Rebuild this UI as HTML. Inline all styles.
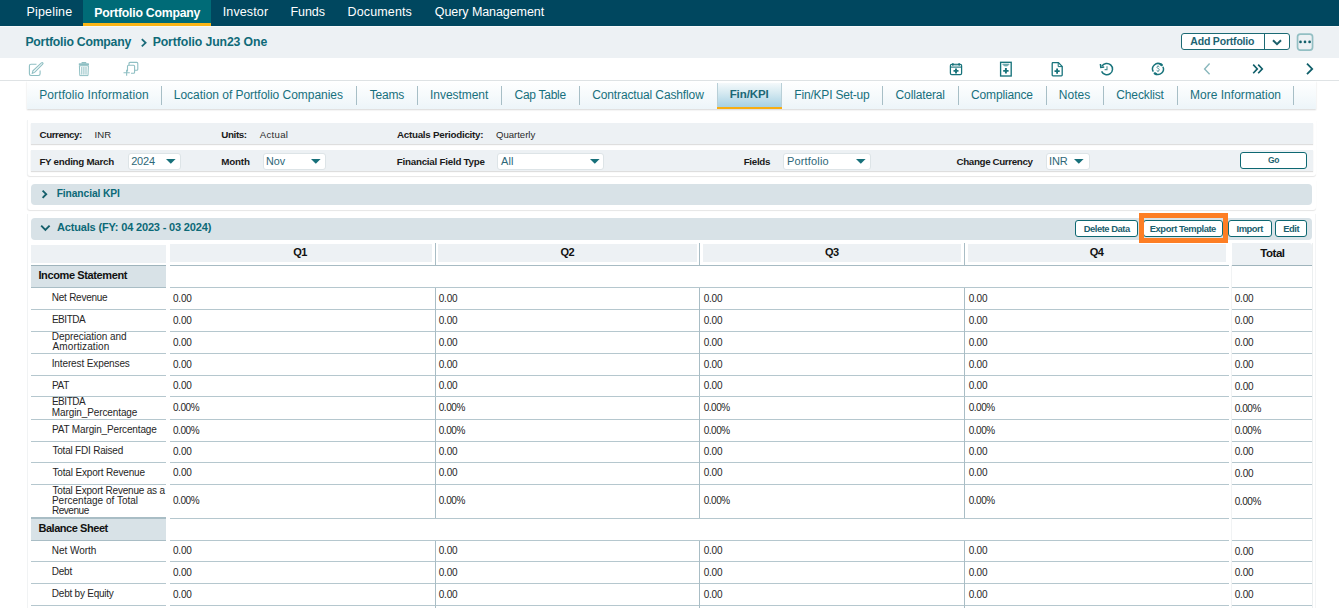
<!DOCTYPE html>
<html><head><meta charset="utf-8">
<style>
html,body{margin:0;padding:0;}
body{width:1339px;height:608px;overflow:hidden;position:relative;background:#ffffff;font-family:"Liberation Sans", sans-serif;}
.r{position:absolute;box-sizing:border-box;}
.t{position:absolute;white-space:nowrap;font-family:"Liberation Sans", sans-serif;}
svg.r{overflow:visible}
</style></head><body>
<!-- NAV -->
<div class="r" style="left:0;top:0;width:1339px;height:26px;background:#00475f"></div>
<div class="r" style="left:83px;top:0;width:128px;height:23px;background:#006b77"></div>
<div class="r" style="left:83px;top:23px;width:128px;height:3px;background:#fbb516"></div>
<!-- BREADCRUMB -->
<div class="r" style="left:0;top:26px;width:1339px;height:31.7px;background:#edf1f4"></div>
<div class="r" style="left:0;top:26px;width:1339px;height:1px;background:#f8fafb"></div>
<svg class="r" style="left:140px;top:38px" width="8" height="10" viewBox="0 0 8 10"><path d="M1.8 1.2 L5.6 4.8 L1.8 8.4" fill="none" stroke="#1b6b7a" stroke-width="1.8"/></svg>
<!-- Add portfolio -->
<div class="r" style="left:1181px;top:33px;width:109px;height:17px;background:#fff;border:1px solid #1b6a74;border-radius:3px"></div>
<div class="r" style="left:1264px;top:33px;width:1px;height:17px;background:#1b6a74"></div>
<svg class="r" style="left:1271px;top:38px" width="12" height="9" viewBox="0 0 12 9"><path d="M2 2.2 L6 6.2 L10 2.2" fill="none" stroke="#1b5f6b" stroke-width="2"/></svg>
<svg class="r" style="left:1294px;top:31px" width="22" height="22" viewBox="0 0 22 22">
<rect x="3.55" y="3.05" width="15" height="16.1" rx="2.8" fill="none" stroke="#93bfc3" stroke-width="1.7"/>
<circle cx="6.5" cy="10.9" r="1.35" fill="#125f6b"/><circle cx="11.0" cy="10.9" r="1.35" fill="#125f6b"/><circle cx="15.6" cy="10.9" r="1.35" fill="#125f6b"/>
</svg>
<!-- TOOLBAR -->
<div class="r" style="left:0;top:80px;width:1339px;height:1px;background:#dfe3e5"></div>
<!-- left icons -->
<svg class="r" style="left:27px;top:61px" width="18" height="16" viewBox="0 0 18 16" fill="none" stroke="#8fbfc3" stroke-width="1.1">
<path d="M9.5 3.2 H4 Q2.4 3.2 2.4 4.8 V12.8 Q2.4 14.5 4 14.5 H11.5 Q13.1 14.5 13.1 12.8 V9.5"/>
<path d="M5.3 12.3 L5.9 9.9 L14.4 1.9 Q15.2 1.3 15.8 1.9 Q16.4 2.6 15.7 3.2 L7.6 11.4 Z"/>
</svg>
<svg class="r" style="left:78px;top:61px" width="12" height="16" viewBox="0 0 12 16" fill="#8fbfc3">
<rect x="0.8" y="2.2" width="10.2" height="2.2" rx="0.6"/>
<rect x="3.5" y="1" width="4.8" height="1.6" rx="0.5"/>
<path d="M1.4 4.8 H10.4 L10 14.6 H1.8 Z" fill="none" stroke="#8fbfc3" stroke-width="1"/>
<rect x="3.3" y="6" width="1" height="7.6"/><rect x="5.4" y="6" width="1" height="7.6"/><rect x="7.5" y="6" width="1" height="7.6"/>
</svg>
<svg class="r" style="left:122px;top:61px" width="17" height="16" viewBox="0 0 17 16" fill="none" stroke="#8fbfc3" stroke-width="1.1">
<path d="M7 4.2 V2.4 Q7 1.4 8 1.4 H14.8 Q15.8 1.4 15.8 2.4 V8.2 Q15.8 9.2 14.8 9.2 H12.6"/>
<path d="M5.5 10.6 V5.2 Q5.5 4.2 6.5 4.2 H11.6 Q12.6 4.2 12.6 5.2 V11.2 Q12.6 12.2 11.6 12.2 H9"/>
<path d="M1.5 11.8 H7.8 M4.65 8.8 V14.8"/>
</svg>
<!-- right icons -->
<svg class="r" style="left:949px;top:62px" width="14" height="14" viewBox="0 0 14 14" fill="none" stroke="#17737b" stroke-width="1.25">
<rect x="1.4" y="2.4" width="11.2" height="10.2" rx="1.3"/>
<path d="M1.6 5.1 H12.4" stroke-width="1.1"/>
<path d="M5.2 3.0 H8.8" stroke-width="1" stroke="#5d9ca2"/>
<path d="M3.9 0.9 V4 M10.1 0.9 V4" stroke-width="1.2"/>
<path d="M7 6.4 V11.4 M4.5 8.9 H9.5" stroke-width="1.9"/>
</svg>
<svg class="r" style="left:999px;top:61px" width="14" height="16" viewBox="0 0 14 16" fill="none" stroke="#17737b" stroke-width="1.35">
<rect x="1.6" y="1.3" width="10.6" height="13.7"/>
<path d="M3.6 3.1 H10.2 L8.4 5.0 H5.4 Z" fill="#6fa9ae" stroke="#6fa9ae" stroke-width="0.8"/>
<path d="M6.9 7.1 V12.6 M4.2 9.85 H9.6" stroke-width="1.9"/>
</svg>
<svg class="r" style="left:1050px;top:61px" width="14" height="16" viewBox="0 0 14 16" fill="none" stroke="#17737b" stroke-width="1.3">
<path d="M2.2 1.6 H8.4 L12.2 5.4 V14 Q12.2 14.8 11.4 14.8 H3 Q2.2 14.8 2.2 14 V2.4 Q2.2 1.6 3 1.6 Z"/>
<path d="M8.2 1.6 V5.6 H12.2" stroke-width="1"/>
<path d="M7.1 7.6 V12.8 M4.5 10.2 H9.7" stroke-width="1.8"/>
</svg>
<svg class="r" style="left:1099px;top:61px" width="16" height="16" viewBox="0 0 16 16" fill="none" stroke="#17737b" stroke-width="1.5">
<path d="M2.9 5.2 A5.7 5.7 0 1 1 2.6 10.4"/>
<path d="M1.4 3 L1.8 6.4 L5.2 6" stroke-width="1.5"/>
<path d="M8 5.2 V8.6 H5.6" stroke-width="1.1" stroke="#4d8f95"/>
</svg>
<svg class="r" style="left:1150px;top:60.7px" width="16" height="16" viewBox="0 0 16 16" fill="none" stroke="#17737b" stroke-width="1.5">
<path d="M11.13 3.54 A5.45 5.45 0 0 0 3.28 10.72"/>
<path d="M5.44 12.81 A5.45 5.45 0 0 0 12.94 5.70"/>
<path d="M11.72 4.01 L10.64 3.23" stroke-width="2.4" stroke-linecap="round"/>
<path d="M4.80 12.41 L5.96 13.05" stroke-width="2.4" stroke-linecap="round"/>
<path d="M9.4 6.0 Q9.0 5.3 8 5.3 Q6.9 5.3 6.9 6.3 Q6.9 7.1 8.1 7.4 Q9.3 7.8 9.3 8.8 Q9.3 10.0 8 10.0 Q7.0 10.0 6.6 9.3 M8 4.5 V5.3 M8 10.0 V10.9" stroke-width="0.9" stroke="#4f9198"/>
</svg>
<svg class="r" style="left:1202px;top:62px" width="10" height="14" viewBox="0 0 10 14"><path d="M7.6 1.6 L2.6 6.9 L7.6 12.2" fill="none" stroke="#8ab8bd" stroke-width="1.4"/></svg>
<svg class="r" style="left:1251px;top:62px" width="14" height="14" viewBox="0 0 14 14" fill="none" stroke="#105f6a" stroke-width="1.6"><path d="M2.2 2.6 L6.3 6.9 L2.2 11.2 M7.2 2.6 L11.3 6.9 L7.2 11.2"/></svg>
<svg class="r" style="left:1304px;top:62px" width="11" height="14" viewBox="0 0 11 14"><path d="M3 1.6 L8.2 6.9 L3 12.2" fill="none" stroke="#105f6a" stroke-width="1.8"/></svg>
<!-- TAB BAR -->
<div class="r" style="left:27px;top:81px;width:1289px;height:27.6px;background:linear-gradient(#ffffff,#edf5f9);box-shadow:0 1px 1.5px rgba(0,0,0,0.16)"></div>
<div class="r" style="left:717px;top:82.5px;width:64.5px;height:24.5px;background:linear-gradient(#f4f9fb 0%,#d3e8f0 45%,#a6d1e4 100%);border-left:1px solid #b8cfd7;border-right:1px solid #b8cfd7"></div>
<div class="r" style="left:717px;top:106.6px;width:64.5px;height:2.2px;background:#f7ad12"></div>
<div class="r" style="left:161.0px;top:86px;width:1px;height:18.5px;background:#a7bec6"></div>
<div class="r" style="left:356.1px;top:86px;width:1px;height:18.5px;background:#a7bec6"></div>
<div class="r" style="left:416.9px;top:86px;width:1px;height:18.5px;background:#a7bec6"></div>
<div class="r" style="left:500.9px;top:86px;width:1px;height:18.5px;background:#a7bec6"></div>
<div class="r" style="left:578.5px;top:86px;width:1px;height:18.5px;background:#a7bec6"></div>
<div class="r" style="left:882.0px;top:86px;width:1px;height:18.5px;background:#a7bec6"></div>
<div class="r" style="left:957.9px;top:86px;width:1px;height:18.5px;background:#a7bec6"></div>
<div class="r" style="left:1045.9px;top:86px;width:1px;height:18.5px;background:#a7bec6"></div>
<div class="r" style="left:1102.8px;top:86px;width:1px;height:18.5px;background:#a7bec6"></div>
<div class="r" style="left:1176.9px;top:86px;width:1px;height:18.5px;background:#a7bec6"></div>
<div class="r" style="left:1293.1px;top:86px;width:1px;height:18.5px;background:#a7bec6"></div>
<!-- CARDS -->
<div class="r" style="left:27px;top:120px;width:1289px;height:56px;background:#fff;border-left:1px solid #f1f3f4;border-radius:0 0 3px 3px;box-shadow:0 1px 1px rgba(0,0,0,0.10)"></div>
<div class="r" style="left:27px;top:180px;width:1289px;height:29.5px;background:#fff;border-left:1px solid #f1f3f4;border-radius:0 0 3px 3px;box-shadow:0 1px 1px rgba(0,0,0,0.10)"></div>
<div class="r" style="left:27px;top:214px;width:1289px;height:420px;background:#fff;border-left:1px solid #f1f3f4;border-right:1px solid #f4f5f6"></div>
<!-- filter rows -->
<div class="r" style="left:31px;top:123px;width:1282px;height:21px;background:#edf1f4;box-shadow:0 1px 1px rgba(0,0,0,0.13)"></div>
<div class="r" style="left:31px;top:150px;width:1282px;height:21px;background:#edf1f4;box-shadow:0 1px 1px rgba(0,0,0,0.13)"></div>
<!-- selects -->
<div class="r" style="left:128px;top:152.5px;width:52.5px;height:17px;background:#fff;border:1px solid #dde4e7;border-radius:3px"></div>
<div class="r" style="left:262.7px;top:152.5px;width:63.5px;height:17px;background:#fff;border:1px solid #dde4e7;border-radius:3px"></div>
<div class="r" style="left:497.3px;top:152.5px;width:107px;height:17px;background:#fff;border:1px solid #dde4e7;border-radius:3px"></div>
<div class="r" style="left:783.3px;top:152.5px;width:88px;height:17px;background:#fff;border:1px solid #dde4e7;border-radius:3px"></div>
<div class="r" style="left:1046.2px;top:152.5px;width:43.5px;height:17px;background:#fff;border:1px solid #dde4e7;border-radius:3px"></div>
<svg class="r" style="left:165.5px;top:159px" width="10" height="5" viewBox="0 0 10 5"><path d="M0 0 H9.6 L4.8 4.8 Z" fill="#17707a"/></svg>
<svg class="r" style="left:311.3px;top:159px" width="10" height="5" viewBox="0 0 10 5"><path d="M0 0 H9.6 L4.8 4.8 Z" fill="#17707a"/></svg>
<svg class="r" style="left:590.0px;top:159px" width="10" height="5" viewBox="0 0 10 5"><path d="M0 0 H9.6 L4.8 4.8 Z" fill="#17707a"/></svg>
<svg class="r" style="left:856.0px;top:159px" width="10" height="5" viewBox="0 0 10 5"><path d="M0 0 H9.6 L4.8 4.8 Z" fill="#17707a"/></svg>
<svg class="r" style="left:1073.6px;top:159px" width="10" height="5" viewBox="0 0 10 5"><path d="M0 0 H9.6 L4.8 4.8 Z" fill="#17707a"/></svg>
<div class="r" style="left:1240.4px;top:152.4px;width:66.8px;height:16.8px;background:#fff;border:1.2px solid #0e6872;border-radius:3px"></div>
<div class="r" style="left:31px;top:184px;width:1281px;height:21px;background:#d8e2e7;border-radius:4px"></div>
<svg class="r" style="left:41px;top:189px" width="8" height="10" viewBox="0 0 8 10"><path d="M1.6 1.6 L5.2 5.2 L1.6 8.8" fill="none" stroke="#155f6b" stroke-width="1.9"/></svg>
<div class="r" style="left:31px;top:218px;width:1281px;height:21.8px;background:#d8e2e7;border-radius:4px"></div>
<svg class="r" style="left:40px;top:224px" width="11" height="8" viewBox="0 0 11 8"><path d="M1.2 1.6 L5.4 5.8 L9.6 1.6" fill="none" stroke="#155f6b" stroke-width="1.9"/></svg>
<div class="r" style="left:1075px;top:220.2px;width:62.7px;height:16.7px;background:#fff;border:1.2px solid #0e6872;border-radius:3px"></div>
<div class="r" style="left:1143.3px;top:220.2px;width:80.2px;height:16.7px;background:#fff;border:1.2px solid #0e6872;border-radius:3px"></div>
<div class="r" style="left:1228.3px;top:220.2px;width:43.6px;height:16.7px;background:#fff;border:1.2px solid #0e6872;border-radius:3px"></div>
<div class="r" style="left:1275px;top:220.2px;width:31.9px;height:16.7px;background:#fff;border:1.2px solid #0e6872;border-radius:3px"></div>
<div class="r" style="left:1139px;top:213px;width:89px;height:30px;border:5px solid #fd7e24"></div>
<div class="r" style="left:31.00px;top:244.50px;width:135.00px;height:18.30px;background:#edf1f4"></div>
<div class="r" style="left:170.00px;top:244.00px;width:262.00px;height:17.80px;background:#edf1f4"></div>
<div class="r" style="left:438.00px;top:244.00px;width:259.00px;height:17.80px;background:#edf1f4"></div>
<div class="r" style="left:703.00px;top:244.00px;width:258.00px;height:17.80px;background:#edf1f4"></div>
<div class="r" style="left:968.00px;top:244.00px;width:258.00px;height:17.80px;background:#edf1f4"></div>
<div class="r" style="left:1232.00px;top:242.50px;width:80.30px;height:22.50px;background:#edf1f4;border-radius:0 3px 0 0"></div>
<div class="r" style="left:1312.00px;top:242.50px;width:1.00px;height:400.00px;background:#eceff0"></div>
<div class="r" style="left:1231.00px;top:265.00px;width:1.00px;height:400.00px;background:#f1f3f4"></div>
<div class="r" style="left:31.00px;top:264.50px;width:135.00px;height:1.30px;background:#9fb4bc"></div>
<div class="r" style="left:170.00px;top:264.60px;width:1059.00px;height:1.20px;background:#a7bbc3"></div>
<div class="r" style="left:1232.00px;top:264.60px;width:80.30px;height:1.30px;background:#9fb4bc"></div>
<div class="r" style="left:435.00px;top:243.00px;width:1.00px;height:22.00px;background:#a9bdc5"></div>
<div class="r" style="left:699.10px;top:243.00px;width:1.00px;height:22.00px;background:#a9bdc5"></div>
<div class="r" style="left:964.10px;top:243.00px;width:1.00px;height:22.00px;background:#a9bdc5"></div>
<div class="r" style="left:31.00px;top:265.50px;width:135.00px;height:22.00px;background:#d8e2e7"></div>
<div class="r" style="left:31.00px;top:287.00px;width:135.00px;height:1.20px;background:#a9bdc5"></div>
<div class="r" style="left:170.00px;top:287.00px;width:1059.00px;height:1.10px;background:#b5c7ce"></div>
<div class="r" style="left:1232.00px;top:287.00px;width:80.30px;height:1.10px;background:#b5c7ce"></div>
<div class="r" style="left:31.00px;top:308.80px;width:135.00px;height:1.10px;background:#b5c7ce"></div>
<div class="r" style="left:170.00px;top:308.80px;width:1059.00px;height:1.10px;background:#b5c7ce"></div>
<div class="r" style="left:1232.00px;top:308.80px;width:80.30px;height:1.10px;background:#b5c7ce"></div>
<div class="r" style="left:435.00px;top:287.50px;width:1.00px;height:21.80px;background:#a9bdc5"></div>
<div class="r" style="left:699.10px;top:287.50px;width:1.00px;height:21.80px;background:#a9bdc5"></div>
<div class="r" style="left:964.10px;top:287.50px;width:1.00px;height:21.80px;background:#a9bdc5"></div>
<div class="r" style="left:31.00px;top:330.90px;width:135.00px;height:1.10px;background:#b5c7ce"></div>
<div class="r" style="left:170.00px;top:330.90px;width:1059.00px;height:1.10px;background:#b5c7ce"></div>
<div class="r" style="left:1232.00px;top:330.90px;width:80.30px;height:1.10px;background:#b5c7ce"></div>
<div class="r" style="left:435.00px;top:309.30px;width:1.00px;height:22.10px;background:#a9bdc5"></div>
<div class="r" style="left:699.10px;top:309.30px;width:1.00px;height:22.10px;background:#a9bdc5"></div>
<div class="r" style="left:964.10px;top:309.30px;width:1.00px;height:22.10px;background:#a9bdc5"></div>
<div class="r" style="left:31.00px;top:352.70px;width:135.00px;height:1.10px;background:#b5c7ce"></div>
<div class="r" style="left:170.00px;top:352.70px;width:1059.00px;height:1.10px;background:#b5c7ce"></div>
<div class="r" style="left:1232.00px;top:352.70px;width:80.30px;height:1.10px;background:#b5c7ce"></div>
<div class="r" style="left:435.00px;top:331.40px;width:1.00px;height:21.80px;background:#a9bdc5"></div>
<div class="r" style="left:699.10px;top:331.40px;width:1.00px;height:21.80px;background:#a9bdc5"></div>
<div class="r" style="left:964.10px;top:331.40px;width:1.00px;height:21.80px;background:#a9bdc5"></div>
<div class="r" style="left:31.00px;top:374.90px;width:135.00px;height:1.10px;background:#b5c7ce"></div>
<div class="r" style="left:170.00px;top:374.90px;width:1059.00px;height:1.10px;background:#b5c7ce"></div>
<div class="r" style="left:1232.00px;top:374.90px;width:80.30px;height:1.10px;background:#b5c7ce"></div>
<div class="r" style="left:435.00px;top:353.20px;width:1.00px;height:22.20px;background:#a9bdc5"></div>
<div class="r" style="left:699.10px;top:353.20px;width:1.00px;height:22.20px;background:#a9bdc5"></div>
<div class="r" style="left:964.10px;top:353.20px;width:1.00px;height:22.20px;background:#a9bdc5"></div>
<div class="r" style="left:31.00px;top:396.00px;width:135.00px;height:1.10px;background:#b5c7ce"></div>
<div class="r" style="left:170.00px;top:396.00px;width:1059.00px;height:1.10px;background:#b5c7ce"></div>
<div class="r" style="left:1232.00px;top:396.00px;width:80.30px;height:1.10px;background:#b5c7ce"></div>
<div class="r" style="left:435.00px;top:375.40px;width:1.00px;height:21.10px;background:#a9bdc5"></div>
<div class="r" style="left:699.10px;top:375.40px;width:1.00px;height:21.10px;background:#a9bdc5"></div>
<div class="r" style="left:964.10px;top:375.40px;width:1.00px;height:21.10px;background:#a9bdc5"></div>
<div class="r" style="left:31.00px;top:418.90px;width:135.00px;height:1.10px;background:#b5c7ce"></div>
<div class="r" style="left:170.00px;top:418.90px;width:1059.00px;height:1.10px;background:#b5c7ce"></div>
<div class="r" style="left:1232.00px;top:418.90px;width:80.30px;height:1.10px;background:#b5c7ce"></div>
<div class="r" style="left:435.00px;top:396.50px;width:1.00px;height:22.90px;background:#a9bdc5"></div>
<div class="r" style="left:699.10px;top:396.50px;width:1.00px;height:22.90px;background:#a9bdc5"></div>
<div class="r" style="left:964.10px;top:396.50px;width:1.00px;height:22.90px;background:#a9bdc5"></div>
<div class="r" style="left:31.00px;top:440.80px;width:135.00px;height:1.10px;background:#b5c7ce"></div>
<div class="r" style="left:170.00px;top:440.80px;width:1059.00px;height:1.10px;background:#b5c7ce"></div>
<div class="r" style="left:1232.00px;top:440.80px;width:80.30px;height:1.10px;background:#b5c7ce"></div>
<div class="r" style="left:435.00px;top:419.40px;width:1.00px;height:21.90px;background:#a9bdc5"></div>
<div class="r" style="left:699.10px;top:419.40px;width:1.00px;height:21.90px;background:#a9bdc5"></div>
<div class="r" style="left:964.10px;top:419.40px;width:1.00px;height:21.90px;background:#a9bdc5"></div>
<div class="r" style="left:31.00px;top:461.90px;width:135.00px;height:1.10px;background:#b5c7ce"></div>
<div class="r" style="left:170.00px;top:461.90px;width:1059.00px;height:1.10px;background:#b5c7ce"></div>
<div class="r" style="left:1232.00px;top:461.90px;width:80.30px;height:1.10px;background:#b5c7ce"></div>
<div class="r" style="left:435.00px;top:441.30px;width:1.00px;height:21.10px;background:#a9bdc5"></div>
<div class="r" style="left:699.10px;top:441.30px;width:1.00px;height:21.10px;background:#a9bdc5"></div>
<div class="r" style="left:964.10px;top:441.30px;width:1.00px;height:21.10px;background:#a9bdc5"></div>
<div class="r" style="left:31.00px;top:483.60px;width:135.00px;height:1.10px;background:#b5c7ce"></div>
<div class="r" style="left:170.00px;top:483.60px;width:1059.00px;height:1.10px;background:#b5c7ce"></div>
<div class="r" style="left:1232.00px;top:483.60px;width:80.30px;height:1.10px;background:#b5c7ce"></div>
<div class="r" style="left:435.00px;top:462.40px;width:1.00px;height:21.70px;background:#a9bdc5"></div>
<div class="r" style="left:699.10px;top:462.40px;width:1.00px;height:21.70px;background:#a9bdc5"></div>
<div class="r" style="left:964.10px;top:462.40px;width:1.00px;height:21.70px;background:#a9bdc5"></div>
<div class="r" style="left:31.00px;top:517.60px;width:135.00px;height:1.10px;background:#b5c7ce"></div>
<div class="r" style="left:170.00px;top:517.60px;width:1059.00px;height:1.10px;background:#b5c7ce"></div>
<div class="r" style="left:1232.00px;top:517.60px;width:80.30px;height:1.10px;background:#b5c7ce"></div>
<div class="r" style="left:435.00px;top:484.10px;width:1.00px;height:34.00px;background:#a9bdc5"></div>
<div class="r" style="left:699.10px;top:484.10px;width:1.00px;height:34.00px;background:#a9bdc5"></div>
<div class="r" style="left:964.10px;top:484.10px;width:1.00px;height:34.00px;background:#a9bdc5"></div>
<div class="r" style="left:31.00px;top:518.10px;width:135.00px;height:22.50px;background:#d8e2e7"></div>
<div class="r" style="left:31.00px;top:540.10px;width:135.00px;height:1.20px;background:#a9bdc5"></div>
<div class="r" style="left:170.00px;top:540.10px;width:1059.00px;height:1.10px;background:#b5c7ce"></div>
<div class="r" style="left:1232.00px;top:540.10px;width:80.30px;height:1.10px;background:#b5c7ce"></div>
<div class="r" style="left:31.00px;top:517.30px;width:135.00px;height:1.60px;background:#a9bdc5"></div>
<div class="r" style="left:31.00px;top:561.30px;width:135.00px;height:1.10px;background:#b5c7ce"></div>
<div class="r" style="left:170.00px;top:561.30px;width:1059.00px;height:1.10px;background:#b5c7ce"></div>
<div class="r" style="left:1232.00px;top:561.30px;width:80.30px;height:1.10px;background:#b5c7ce"></div>
<div class="r" style="left:435.00px;top:540.60px;width:1.00px;height:21.20px;background:#a9bdc5"></div>
<div class="r" style="left:699.10px;top:540.60px;width:1.00px;height:21.20px;background:#a9bdc5"></div>
<div class="r" style="left:964.10px;top:540.60px;width:1.00px;height:21.20px;background:#a9bdc5"></div>
<div class="r" style="left:31.00px;top:582.90px;width:135.00px;height:1.10px;background:#b5c7ce"></div>
<div class="r" style="left:170.00px;top:582.90px;width:1059.00px;height:1.10px;background:#b5c7ce"></div>
<div class="r" style="left:1232.00px;top:582.90px;width:80.30px;height:1.10px;background:#b5c7ce"></div>
<div class="r" style="left:435.00px;top:561.80px;width:1.00px;height:21.60px;background:#a9bdc5"></div>
<div class="r" style="left:699.10px;top:561.80px;width:1.00px;height:21.60px;background:#a9bdc5"></div>
<div class="r" style="left:964.10px;top:561.80px;width:1.00px;height:21.60px;background:#a9bdc5"></div>
<div class="r" style="left:31.00px;top:604.90px;width:135.00px;height:1.10px;background:#b5c7ce"></div>
<div class="r" style="left:170.00px;top:604.90px;width:1059.00px;height:1.10px;background:#b5c7ce"></div>
<div class="r" style="left:1232.00px;top:604.90px;width:80.30px;height:1.10px;background:#b5c7ce"></div>
<div class="r" style="left:435.00px;top:583.40px;width:1.00px;height:22.00px;background:#a9bdc5"></div>
<div class="r" style="left:699.10px;top:583.40px;width:1.00px;height:22.00px;background:#a9bdc5"></div>
<div class="r" style="left:964.10px;top:583.40px;width:1.00px;height:22.00px;background:#a9bdc5"></div>
<div class="r" style="left:31.00px;top:626.50px;width:135.00px;height:1.10px;background:#b5c7ce"></div>
<div class="r" style="left:170.00px;top:626.50px;width:1059.00px;height:1.10px;background:#b5c7ce"></div>
<div class="r" style="left:1232.00px;top:626.50px;width:80.30px;height:1.10px;background:#b5c7ce"></div>
<div class="r" style="left:435.00px;top:605.40px;width:1.00px;height:21.60px;background:#a9bdc5"></div>
<div class="r" style="left:699.10px;top:605.40px;width:1.00px;height:21.60px;background:#a9bdc5"></div>
<div class="r" style="left:964.10px;top:605.40px;width:1.00px;height:21.60px;background:#a9bdc5"></div>
<span class="t" style="left:26.49px;top:6.00px;font-size:12.5px;line-height:12.5px;font-weight:400;color:#ffffff;letter-spacing:0.178px;">Pipeline</span>
<span class="t" style="left:222.77px;top:6.00px;font-size:12.5px;line-height:12.5px;font-weight:400;color:#ffffff;letter-spacing:0.116px;">Investor</span>
<span class="t" style="left:290.49px;top:6.00px;font-size:12.5px;line-height:12.5px;font-weight:400;color:#ffffff;letter-spacing:-0.079px;">Funds</span>
<span class="t" style="left:347.59px;top:6.00px;font-size:12.5px;line-height:12.5px;font-weight:400;color:#ffffff;letter-spacing:0.134px;">Documents</span>
<span class="t" style="left:434.82px;top:6.00px;font-size:12.5px;line-height:12.5px;font-weight:400;color:#ffffff;letter-spacing:-0.074px;">Query Management</span>
<span class="t" style="left:94.28px;top:6.80px;font-size:12.25px;line-height:12.25px;font-weight:700;color:#ffffff;letter-spacing:-0.219px;">Portfolio Company</span>
<span class="t" style="left:25.43px;top:35.70px;font-size:12.25px;line-height:12.25px;font-weight:700;color:#0f6a78;letter-spacing:-0.235px;">Portfolio Company</span>
<span class="t" style="left:152.68px;top:35.70px;font-size:12.25px;line-height:12.25px;font-weight:700;color:#0f6a78;letter-spacing:-0.101px;">Portfolio Jun23 One</span>
<span class="t" style="left:1190.28px;top:36.10px;font-size:10.5px;line-height:10.5px;font-weight:700;color:#1d6472;letter-spacing:-0.188px;">Add Portfolio</span>
<span class="t" style="left:39.23px;top:89.00px;font-size:12px;line-height:12px;font-weight:400;color:#17707d;letter-spacing:0.100px;">Portfolio Information</span>
<span class="t" style="left:173.83px;top:89.00px;font-size:12px;line-height:12px;font-weight:400;color:#17707d;letter-spacing:-0.033px;">Location of Portfolio Companies</span>
<span class="t" style="left:369.72px;top:89.00px;font-size:12px;line-height:12px;font-weight:400;color:#17707d;letter-spacing:-0.189px;">Teams</span>
<span class="t" style="left:430.00px;top:89.00px;font-size:12px;line-height:12px;font-weight:400;color:#17707d;letter-spacing:-0.042px;">Investment</span>
<span class="t" style="left:514.59px;top:89.00px;font-size:12px;line-height:12px;font-weight:400;color:#17707d;letter-spacing:-0.292px;">Cap Table</span>
<span class="t" style="left:592.19px;top:89.00px;font-size:12px;line-height:12px;font-weight:400;color:#17707d;letter-spacing:-0.127px;">Contractual Cashflow</span>
<span class="t" style="left:794.33px;top:89.00px;font-size:12px;line-height:12px;font-weight:400;color:#17707d;letter-spacing:-0.201px;">Fin/KPI Set-up</span>
<span class="t" style="left:895.59px;top:89.00px;font-size:12px;line-height:12px;font-weight:400;color:#17707d;letter-spacing:-0.139px;">Collateral</span>
<span class="t" style="left:971.09px;top:89.00px;font-size:12px;line-height:12px;font-weight:400;color:#17707d;letter-spacing:-0.161px;">Compliance</span>
<span class="t" style="left:1058.63px;top:89.00px;font-size:12px;line-height:12px;font-weight:400;color:#17707d;letter-spacing:0.084px;">Notes</span>
<span class="t" style="left:1116.29px;top:89.00px;font-size:12px;line-height:12px;font-weight:400;color:#17707d;letter-spacing:-0.133px;">Checklist</span>
<span class="t" style="left:1189.93px;top:89.00px;font-size:12px;line-height:12px;font-weight:400;color:#17707d;letter-spacing:0.027px;">More Information</span>
<span class="t" style="left:729.69px;top:89.30px;font-size:11.5px;line-height:11.5px;font-weight:700;color:#1b6776;letter-spacing:-0.095px;">Fin/KPI</span>
<span class="t" style="left:39.55px;top:129.80px;font-size:9.8px;line-height:9.8px;font-weight:700;color:#1a1a1a;letter-spacing:-0.445px;">Currency:</span>
<span class="t" style="left:221.32px;top:129.80px;font-size:9.8px;line-height:9.8px;font-weight:700;color:#1a1a1a;letter-spacing:-0.404px;">Units:</span>
<span class="t" style="left:396.95px;top:129.80px;font-size:9.8px;line-height:9.8px;font-weight:700;color:#1a1a1a;letter-spacing:-0.257px;">Actuals Periodicity:</span>
<span class="t" style="left:94.51px;top:129.80px;font-size:9.6px;line-height:9.6px;font-weight:400;color:#2a2a2a;letter-spacing:0.114px;">INR</span>
<span class="t" style="left:259.84px;top:129.80px;font-size:9.6px;line-height:9.6px;font-weight:400;color:#2a2a2a;letter-spacing:0.285px;">Actual</span>
<span class="t" style="left:495.97px;top:129.80px;font-size:9.6px;line-height:9.6px;font-weight:400;color:#2a2a2a;letter-spacing:-0.022px;">Quarterly</span>
<span class="t" style="left:39.39px;top:156.90px;font-size:9.8px;line-height:9.8px;font-weight:700;color:#1a1a1a;letter-spacing:-0.282px;">FY ending March</span>
<span class="t" style="left:221.29px;top:156.90px;font-size:9.8px;line-height:9.8px;font-weight:700;color:#1a1a1a;letter-spacing:-0.183px;">Month</span>
<span class="t" style="left:396.79px;top:156.90px;font-size:9.8px;line-height:9.8px;font-weight:700;color:#1a1a1a;letter-spacing:-0.247px;">Financial Field Type</span>
<span class="t" style="left:743.69px;top:156.90px;font-size:9.8px;line-height:9.8px;font-weight:700;color:#1a1a1a;letter-spacing:-0.312px;">Fields</span>
<span class="t" style="left:956.55px;top:156.90px;font-size:9.8px;line-height:9.8px;font-weight:700;color:#1a1a1a;letter-spacing:-0.378px;">Change Currency</span>
<span class="t" style="left:131.15px;top:155.90px;font-size:11px;line-height:11px;font-weight:400;color:#2e6878;letter-spacing:-0.194px;">2024</span>
<span class="t" style="left:265.94px;top:155.90px;font-size:10.75px;line-height:10.75px;font-weight:400;color:#2e6878;letter-spacing:0.007px;">Nov</span>
<span class="t" style="left:501.12px;top:155.90px;font-size:11px;line-height:11px;font-weight:400;color:#2e6878;letter-spacing:0.027px;">All</span>
<span class="t" style="left:786.96px;top:155.90px;font-size:11px;line-height:11px;font-weight:400;color:#2e6878;letter-spacing:0.164px;">Portfolio</span>
<span class="t" style="left:1049.10px;top:155.90px;font-size:11px;line-height:11px;font-weight:400;color:#2e6878;letter-spacing:-0.225px;">INR</span>
<span class="t" style="left:1267.98px;top:155.90px;font-size:8.5px;line-height:8.5px;font-weight:700;color:#1d6472;letter-spacing:-0.450px;">Go</span>
<span class="t" style="left:56.66px;top:189.00px;font-size:10.25px;line-height:10.25px;font-weight:700;color:#0c6977;letter-spacing:-0.089px;">Financial KPI</span>
<span class="t" style="left:56.95px;top:222.20px;font-size:11.0px;line-height:11.0px;font-weight:700;color:#0c6977;letter-spacing:-0.166px;">Actuals (FY: 04 2023 - 03 2024)</span>
<span class="t" style="left:1083.69px;top:224.00px;font-size:9.4px;line-height:9.4px;font-weight:700;color:#1b5f6e;letter-spacing:-0.450px;">Delete Data</span>
<span class="t" style="left:1149.79px;top:224.00px;font-size:9.4px;line-height:9.4px;font-weight:700;color:#1b5f6e;letter-spacing:-0.444px;">Export Template</span>
<span class="t" style="left:1236.49px;top:224.00px;font-size:9.4px;line-height:9.4px;font-weight:700;color:#1b5f6e;letter-spacing:-0.450px;">Import</span>
<span class="t" style="left:1283.29px;top:224.00px;font-size:9.4px;line-height:9.4px;font-weight:700;color:#1b5f6e;letter-spacing:-0.450px;">Edit</span>
<span class="t" style="left:38.42px;top:269.90px;font-size:11px;line-height:11px;font-weight:700;color:#111111;letter-spacing:-0.384px;">Income Statement</span>
<span class="t" style="left:51.82px;top:293.00px;font-size:10px;line-height:10px;font-weight:400;color:#262626;letter-spacing:-0.251px;">Net Revenue</span>
<span class="t" style="left:172.94px;top:293.60px;font-size:10px;line-height:10px;font-weight:400;color:#262626;letter-spacing:-0.198px;">0.00</span>
<span class="t" style="left:438.74px;top:293.60px;font-size:10px;line-height:10px;font-weight:400;color:#262626;letter-spacing:-0.198px;">0.00</span>
<span class="t" style="left:703.64px;top:293.60px;font-size:10px;line-height:10px;font-weight:400;color:#262626;letter-spacing:-0.198px;">0.00</span>
<span class="t" style="left:968.64px;top:293.60px;font-size:10px;line-height:10px;font-weight:400;color:#262626;letter-spacing:-0.198px;">0.00</span>
<span class="t" style="left:1234.74px;top:294.00px;font-size:10px;line-height:10px;font-weight:400;color:#262626;letter-spacing:-0.198px;">0.00</span>
<span class="t" style="left:51.90px;top:314.95px;font-size:10px;line-height:10px;font-weight:400;color:#262626;letter-spacing:-0.450px;">EBITDA</span>
<span class="t" style="left:172.94px;top:315.55px;font-size:10px;line-height:10px;font-weight:400;color:#262626;letter-spacing:-0.198px;">0.00</span>
<span class="t" style="left:438.74px;top:315.55px;font-size:10px;line-height:10px;font-weight:400;color:#262626;letter-spacing:-0.198px;">0.00</span>
<span class="t" style="left:703.64px;top:315.55px;font-size:10px;line-height:10px;font-weight:400;color:#262626;letter-spacing:-0.198px;">0.00</span>
<span class="t" style="left:968.64px;top:315.55px;font-size:10px;line-height:10px;font-weight:400;color:#262626;letter-spacing:-0.198px;">0.00</span>
<span class="t" style="left:1234.74px;top:315.95px;font-size:10px;line-height:10px;font-weight:400;color:#262626;letter-spacing:-0.198px;">0.00</span>
<span class="t" style="left:51.83px;top:331.60px;font-size:10px;line-height:10px;font-weight:400;color:#262626;letter-spacing:-0.062px;">Depreciation and</span>
<span class="t" style="left:52.60px;top:341.50px;font-size:10px;line-height:10px;font-weight:400;color:#262626;letter-spacing:0.102px;">Amortization</span>
<span class="t" style="left:172.94px;top:337.50px;font-size:10px;line-height:10px;font-weight:400;color:#262626;letter-spacing:-0.198px;">0.00</span>
<span class="t" style="left:438.74px;top:337.50px;font-size:10px;line-height:10px;font-weight:400;color:#262626;letter-spacing:-0.198px;">0.00</span>
<span class="t" style="left:703.64px;top:337.50px;font-size:10px;line-height:10px;font-weight:400;color:#262626;letter-spacing:-0.198px;">0.00</span>
<span class="t" style="left:968.64px;top:337.50px;font-size:10px;line-height:10px;font-weight:400;color:#262626;letter-spacing:-0.198px;">0.00</span>
<span class="t" style="left:1234.74px;top:337.90px;font-size:10px;line-height:10px;font-weight:400;color:#262626;letter-spacing:-0.198px;">0.00</span>
<span class="t" style="left:51.66px;top:358.90px;font-size:10px;line-height:10px;font-weight:400;color:#262626;letter-spacing:-0.115px;">Interest Expenses</span>
<span class="t" style="left:172.94px;top:359.50px;font-size:10px;line-height:10px;font-weight:400;color:#262626;letter-spacing:-0.198px;">0.00</span>
<span class="t" style="left:438.74px;top:359.50px;font-size:10px;line-height:10px;font-weight:400;color:#262626;letter-spacing:-0.198px;">0.00</span>
<span class="t" style="left:703.64px;top:359.50px;font-size:10px;line-height:10px;font-weight:400;color:#262626;letter-spacing:-0.198px;">0.00</span>
<span class="t" style="left:968.64px;top:359.50px;font-size:10px;line-height:10px;font-weight:400;color:#262626;letter-spacing:-0.198px;">0.00</span>
<span class="t" style="left:1234.74px;top:359.90px;font-size:10px;line-height:10px;font-weight:400;color:#262626;letter-spacing:-0.198px;">0.00</span>
<span class="t" style="left:51.90px;top:380.55px;font-size:10px;line-height:10px;font-weight:400;color:#262626;letter-spacing:-0.302px;">PAT</span>
<span class="t" style="left:172.94px;top:381.15px;font-size:10px;line-height:10px;font-weight:400;color:#262626;letter-spacing:-0.198px;">0.00</span>
<span class="t" style="left:438.74px;top:381.15px;font-size:10px;line-height:10px;font-weight:400;color:#262626;letter-spacing:-0.198px;">0.00</span>
<span class="t" style="left:703.64px;top:381.15px;font-size:10px;line-height:10px;font-weight:400;color:#262626;letter-spacing:-0.198px;">0.00</span>
<span class="t" style="left:968.64px;top:381.15px;font-size:10px;line-height:10px;font-weight:400;color:#262626;letter-spacing:-0.198px;">0.00</span>
<span class="t" style="left:1234.74px;top:381.55px;font-size:10px;line-height:10px;font-weight:400;color:#262626;letter-spacing:-0.198px;">0.00</span>
<span class="t" style="left:51.90px;top:397.20px;font-size:10px;line-height:10px;font-weight:400;color:#262626;letter-spacing:-0.450px;">EBITDA</span>
<span class="t" style="left:51.84px;top:407.80px;font-size:10px;line-height:10px;font-weight:400;color:#262626;letter-spacing:-0.109px;">Margin_Percentage</span>
<span class="t" style="left:172.94px;top:403.15px;font-size:10px;line-height:10px;font-weight:400;color:#262626;letter-spacing:-0.430px;">0.00%</span>
<span class="t" style="left:438.74px;top:403.15px;font-size:10px;line-height:10px;font-weight:400;color:#262626;letter-spacing:-0.430px;">0.00%</span>
<span class="t" style="left:703.64px;top:403.15px;font-size:10px;line-height:10px;font-weight:400;color:#262626;letter-spacing:-0.430px;">0.00%</span>
<span class="t" style="left:968.64px;top:403.15px;font-size:10px;line-height:10px;font-weight:400;color:#262626;letter-spacing:-0.430px;">0.00%</span>
<span class="t" style="left:1234.74px;top:403.55px;font-size:10px;line-height:10px;font-weight:400;color:#262626;letter-spacing:-0.430px;">0.00%</span>
<span class="t" style="left:51.90px;top:424.95px;font-size:10px;line-height:10px;font-weight:400;color:#262626;letter-spacing:-0.146px;">PAT Margin_Percentage</span>
<span class="t" style="left:172.94px;top:425.55px;font-size:10px;line-height:10px;font-weight:400;color:#262626;letter-spacing:-0.430px;">0.00%</span>
<span class="t" style="left:438.74px;top:425.55px;font-size:10px;line-height:10px;font-weight:400;color:#262626;letter-spacing:-0.430px;">0.00%</span>
<span class="t" style="left:703.64px;top:425.55px;font-size:10px;line-height:10px;font-weight:400;color:#262626;letter-spacing:-0.430px;">0.00%</span>
<span class="t" style="left:968.64px;top:425.55px;font-size:10px;line-height:10px;font-weight:400;color:#262626;letter-spacing:-0.430px;">0.00%</span>
<span class="t" style="left:1234.74px;top:425.95px;font-size:10px;line-height:10px;font-weight:400;color:#262626;letter-spacing:-0.430px;">0.00%</span>
<span class="t" style="left:52.49px;top:446.45px;font-size:10px;line-height:10px;font-weight:400;color:#262626;letter-spacing:-0.211px;">Total FDI Raised</span>
<span class="t" style="left:172.94px;top:447.05px;font-size:10px;line-height:10px;font-weight:400;color:#262626;letter-spacing:-0.198px;">0.00</span>
<span class="t" style="left:438.74px;top:447.05px;font-size:10px;line-height:10px;font-weight:400;color:#262626;letter-spacing:-0.198px;">0.00</span>
<span class="t" style="left:703.64px;top:447.05px;font-size:10px;line-height:10px;font-weight:400;color:#262626;letter-spacing:-0.198px;">0.00</span>
<span class="t" style="left:968.64px;top:447.05px;font-size:10px;line-height:10px;font-weight:400;color:#262626;letter-spacing:-0.198px;">0.00</span>
<span class="t" style="left:1234.74px;top:447.45px;font-size:10px;line-height:10px;font-weight:400;color:#262626;letter-spacing:-0.198px;">0.00</span>
<span class="t" style="left:52.49px;top:467.85px;font-size:10px;line-height:10px;font-weight:400;color:#262626;letter-spacing:-0.159px;">Total Export Revenue</span>
<span class="t" style="left:172.94px;top:468.45px;font-size:10px;line-height:10px;font-weight:400;color:#262626;letter-spacing:-0.198px;">0.00</span>
<span class="t" style="left:438.74px;top:468.45px;font-size:10px;line-height:10px;font-weight:400;color:#262626;letter-spacing:-0.198px;">0.00</span>
<span class="t" style="left:703.64px;top:468.45px;font-size:10px;line-height:10px;font-weight:400;color:#262626;letter-spacing:-0.198px;">0.00</span>
<span class="t" style="left:968.64px;top:468.45px;font-size:10px;line-height:10px;font-weight:400;color:#262626;letter-spacing:-0.198px;">0.00</span>
<span class="t" style="left:1234.74px;top:468.85px;font-size:10px;line-height:10px;font-weight:400;color:#262626;letter-spacing:-0.198px;">0.00</span>
<span class="t" style="left:52.49px;top:485.50px;font-size:10px;line-height:10px;font-weight:400;color:#262626;letter-spacing:-0.198px;">Total Export Revenue as a</span>
<span class="t" style="left:51.90px;top:496.10px;font-size:10px;line-height:10px;font-weight:400;color:#262626;letter-spacing:0.012px;">Percentage of Total</span>
<span class="t" style="left:51.90px;top:505.90px;font-size:10px;line-height:10px;font-weight:400;color:#262626;letter-spacing:-0.450px;">Revenue</span>
<span class="t" style="left:172.94px;top:496.30px;font-size:10px;line-height:10px;font-weight:400;color:#262626;letter-spacing:-0.430px;">0.00%</span>
<span class="t" style="left:438.74px;top:496.30px;font-size:10px;line-height:10px;font-weight:400;color:#262626;letter-spacing:-0.430px;">0.00%</span>
<span class="t" style="left:703.64px;top:496.30px;font-size:10px;line-height:10px;font-weight:400;color:#262626;letter-spacing:-0.430px;">0.00%</span>
<span class="t" style="left:968.64px;top:496.30px;font-size:10px;line-height:10px;font-weight:400;color:#262626;letter-spacing:-0.430px;">0.00%</span>
<span class="t" style="left:1234.74px;top:496.70px;font-size:10px;line-height:10px;font-weight:400;color:#262626;letter-spacing:-0.430px;">0.00%</span>
<span class="t" style="left:38.42px;top:523.00px;font-size:11px;line-height:11px;font-weight:700;color:#111111;letter-spacing:-0.450px;">Balance Sheet</span>
<span class="t" style="left:51.82px;top:545.80px;font-size:10px;line-height:10px;font-weight:400;color:#262626;letter-spacing:-0.037px;">Net Worth</span>
<span class="t" style="left:172.94px;top:546.40px;font-size:10px;line-height:10px;font-weight:400;color:#262626;letter-spacing:-0.198px;">0.00</span>
<span class="t" style="left:438.74px;top:546.40px;font-size:10px;line-height:10px;font-weight:400;color:#262626;letter-spacing:-0.198px;">0.00</span>
<span class="t" style="left:703.64px;top:546.40px;font-size:10px;line-height:10px;font-weight:400;color:#262626;letter-spacing:-0.198px;">0.00</span>
<span class="t" style="left:968.64px;top:546.40px;font-size:10px;line-height:10px;font-weight:400;color:#262626;letter-spacing:-0.198px;">0.00</span>
<span class="t" style="left:1234.74px;top:546.80px;font-size:10px;line-height:10px;font-weight:400;color:#262626;letter-spacing:-0.198px;">0.00</span>
<span class="t" style="left:51.83px;top:567.20px;font-size:10px;line-height:10px;font-weight:400;color:#262626;letter-spacing:-0.257px;">Debt</span>
<span class="t" style="left:172.94px;top:567.80px;font-size:10px;line-height:10px;font-weight:400;color:#262626;letter-spacing:-0.198px;">0.00</span>
<span class="t" style="left:438.74px;top:567.80px;font-size:10px;line-height:10px;font-weight:400;color:#262626;letter-spacing:-0.198px;">0.00</span>
<span class="t" style="left:703.64px;top:567.80px;font-size:10px;line-height:10px;font-weight:400;color:#262626;letter-spacing:-0.198px;">0.00</span>
<span class="t" style="left:968.64px;top:567.80px;font-size:10px;line-height:10px;font-weight:400;color:#262626;letter-spacing:-0.198px;">0.00</span>
<span class="t" style="left:1234.74px;top:568.20px;font-size:10px;line-height:10px;font-weight:400;color:#262626;letter-spacing:-0.198px;">0.00</span>
<span class="t" style="left:51.83px;top:589.00px;font-size:10px;line-height:10px;font-weight:400;color:#262626;letter-spacing:-0.232px;">Debt by Equity</span>
<span class="t" style="left:172.94px;top:589.60px;font-size:10px;line-height:10px;font-weight:400;color:#262626;letter-spacing:-0.198px;">0.00</span>
<span class="t" style="left:438.74px;top:589.60px;font-size:10px;line-height:10px;font-weight:400;color:#262626;letter-spacing:-0.198px;">0.00</span>
<span class="t" style="left:703.64px;top:589.60px;font-size:10px;line-height:10px;font-weight:400;color:#262626;letter-spacing:-0.198px;">0.00</span>
<span class="t" style="left:968.64px;top:589.60px;font-size:10px;line-height:10px;font-weight:400;color:#262626;letter-spacing:-0.198px;">0.00</span>
<span class="t" style="left:1234.74px;top:590.00px;font-size:10px;line-height:10px;font-weight:400;color:#262626;letter-spacing:-0.198px;">0.00</span>
<span class="t" style="left:293.19px;top:247.00px;font-size:11px;line-height:11px;font-weight:700;color:#111111;letter-spacing:-0.450px;">Q1</span>
<span class="t" style="left:560.40px;top:247.00px;font-size:11px;line-height:11px;font-weight:700;color:#111111;letter-spacing:-0.450px;">Q2</span>
<span class="t" style="left:824.90px;top:247.00px;font-size:11px;line-height:11px;font-weight:700;color:#111111;letter-spacing:-0.450px;">Q3</span>
<span class="t" style="left:1089.73px;top:247.00px;font-size:11px;line-height:11px;font-weight:700;color:#111111;letter-spacing:-0.450px;">Q4</span>
<span class="t" style="left:1260.24px;top:247.90px;font-size:11.5px;line-height:11.5px;font-weight:700;color:#111111;letter-spacing:-0.450px;">Total</span>
</body></html>
